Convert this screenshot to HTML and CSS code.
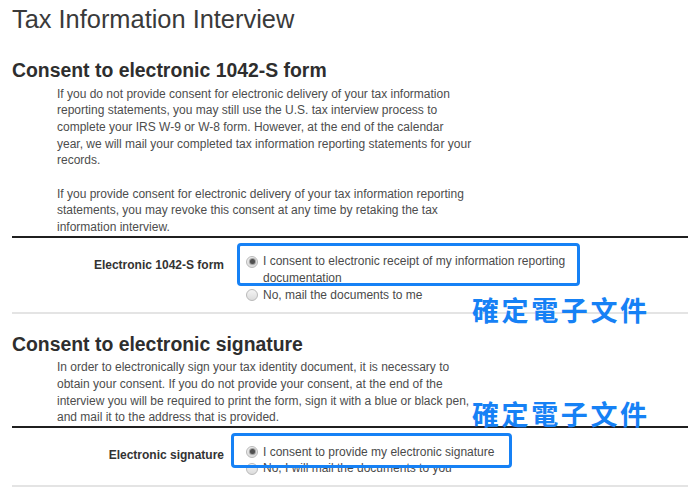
FILE: index.html
```html
<!DOCTYPE html>
<html lang="en">
<head>
<meta charset="utf-8">
<title>Tax Information Interview</title>
<link rel="stylesheet" href="styles.css">
</head>
<body>
<div class="page">
  <h1 class="title">Tax Information Interview</h1>

  <section class="section section-first">
    <h2 class="heading">Consent to electronic 1042-S form</h2>
    <div class="desc">
      <p>If you do not provide consent for electronic delivery of your tax information reporting statements, you may still use the U.S. tax interview process to complete your IRS W-9 or W-8 form. However, at the end of the calendar<br>year, we will mail your completed tax information reporting statements for your records.</p>
      <p>If you provide consent for electronic delivery of your tax information reporting statements, you may revoke this consent at any time by retaking the tax information interview.</p>
    </div>
    <div class="field">
      <div class="field-label">Electronic 1042-S form</div>
      <div class="options">
        <label class="option"><span class="radio checked"></span><span class="option-text">I consent to electronic receipt of my information reporting documentation</span></label>
        <label class="option"><span class="radio"></span><span class="option-text">No, mail the documents to me</span></label>
      </div>
      <div class="highlight highlight-one"></div>
    </div>
  </section>

  <section class="section section-second">
    <h2 class="heading">Consent to electronic signature</h2>
    <div class="desc">
      <p>In order to electronically sign your tax identity document, it is necessary to obtain your consent. If you do not provide your consent, at the end of the interview you will be required to print the form, sign it with a blue or black pen, and mail it to the address that is provided.</p>
    </div>
    <div class="field">
      <div class="field-label">Electronic signature</div>
      <div class="options">
        <label class="option"><span class="radio checked"></span><span class="option-text">I consent to provide my electronic signature</span></label>
        <label class="option"><span class="radio"></span><span class="option-text">No, I will mail the documents to you</span></label>
      </div>
      <div class="highlight highlight-two"></div>
    </div>
  </section>

  <div class="note note-one">確定電子文件</div>
  <div class="note note-two">確定電子文件</div>
</div>
</body>
</html>
```

FILE: styles.css
```css
html, body {
  margin: 0;
  padding: 0;
  background: #ffffff;
}

body {
  font-family: "Liberation Sans", Arial, sans-serif;
  color: #444444;
  width: 700px;
  height: 488px;
  overflow: hidden;
}

.page {
  position: relative;
  padding: 0 12px;
}

.title {
  margin: 4px 0 0 0;
  font-size: 25.4px;
  line-height: 30px;
  font-weight: normal;
  color: #3a3a3a;
}

.heading {
  margin: 0;
  font-size: 19.4px;
  line-height: 24px;
  font-weight: bold;
  color: #2e2e2e;
}

.section-first .heading {
  margin-top: 24px;
}

.section-second .heading {
  margin-top: 18px;
}

.desc {
  margin: 3.5px 0 0 45px;
  width: 422px;
  font-size: 12px;
  line-height: 16.7px;
  color: #4d4d4d;
}

.desc p {
  margin: 0;
}

.desc p + p {
  margin-top: 16.7px;
}

.field {
  position: relative;
  display: grid;
  grid-template-columns: 212px 1fr;
  column-gap: 22px;
  border-top: 2px solid #1f1f1f;
  border-bottom: 2px solid #e4e4e4;
  padding-bottom: 8.5px;
}

.field-label {
  padding-top: 19px;
  text-align: right;
  font-size: 12px;
  line-height: 16.7px;
  font-weight: bold;
  color: #333333;
}

.options {
  padding-top: 15.4px;
  display: flex;
  flex-direction: column;
  font-size: 12px;
  line-height: 16.7px;
  color: #4a4a4a;
}

.option {
  display: flex;
  align-items: flex-start;
}

.option-text {
  max-width: 330px;
}

.radio {
  flex: none;
  box-sizing: border-box;
  width: 12px;
  height: 12px;
  margin: 2.4px 5px 0 0;
  border-radius: 50%;
  border: 1px solid #b9b9b9;
  background: linear-gradient(#f4f4f4, #dcdcdc);
  position: relative;
}

.radio.checked::after {
  content: "";
  position: absolute;
  left: 2.5px;
  top: 2.5px;
  width: 5px;
  height: 5px;
  border-radius: 50%;
  background: #4f4f4f;
  box-shadow: 0 0 1px 1px #9a9a9a;
}

.highlight {
  position: absolute;
  box-sizing: border-box;
  border: 3px solid #1681f5;
  border-radius: 4px;
  top: 5px;
}

.highlight-one {
  left: 225px;
  width: 343px;
  height: 43px;
}

.highlight-two {
  left: 219px;
  width: 281px;
  height: 35px;
}

.note {
  position: absolute;
  left: 472px;
  font-family: "Noto Sans CJK TC", "Noto Sans CJK SC", sans-serif;
  font-size: 27px;
  line-height: 27px;
  letter-spacing: 2.6px;
  font-weight: 700;
  color: #1681f5;
  white-space: nowrap;
}

.note-one {
  top: 292px;
}

.note-two {
  top: 396px;
}
```
